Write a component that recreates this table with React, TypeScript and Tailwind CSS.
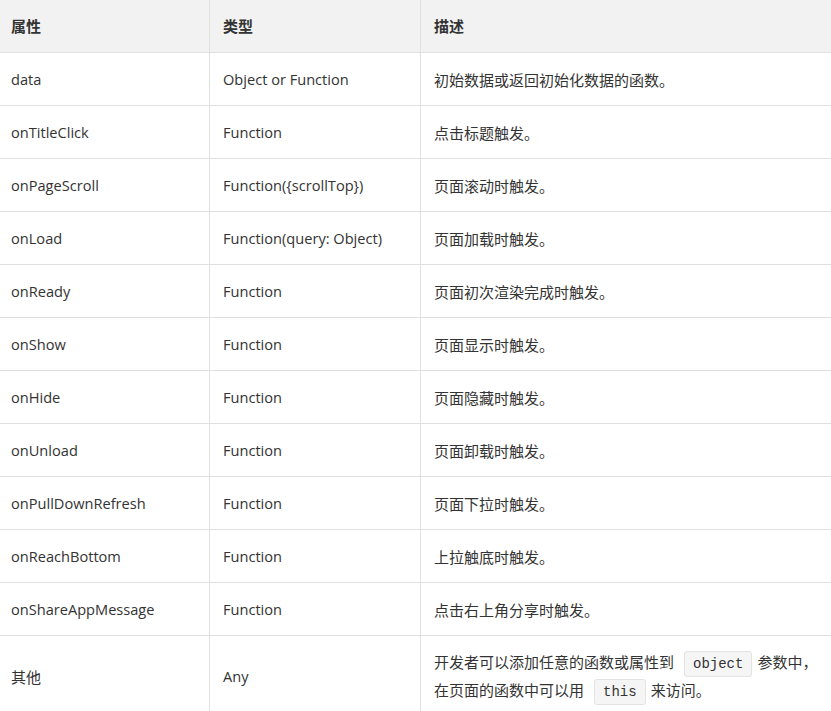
const rows: [string, string, string][] = [
  ['data', 'Object or Function', '初始数据或返回初始化数据的函数。'],
  ['onTitleClick', 'Function', '点击标题触发。'],
  ['onPageScroll', 'Function({scrollTop})', '页面滚动时触发。'],
  ['onLoad', 'Function(query: Object)', '页面加载时触发。'],
  ['onReady', 'Function', '页面初次渲染完成时触发。'],
  ['onShow', 'Function', '页面显示时触发。'],
  ['onHide', 'Function', '页面隐藏时触发。'],
  ['onUnload', 'Function', '页面卸载时触发。'],
  ['onPullDownRefresh', 'Function', '页面下拉时触发。'],
  ['onReachBottom', 'Function', '上拉触底时触发。'],
  ['onShareAppMessage', 'Function', '点击右上角分享时触发。'],
];

function Code({ children }: { children: string }) {
  return (
    <code className="ml-[10px] mr-[5px] inline-block rounded-[3px] border border-[#e3e3e3] bg-[#f5f5f5] px-[8px] align-middle leading-[24px] text-[14px] text-[#333] font-['Liberation_Mono',monospace]">
      {children}
    </code>
  );
}

export default function App() {
  return (
    <div className="w-[831px] overflow-hidden bg-white text-[14.6px] text-[#333] font-['Open_Sans','Noto_Sans_CJK_SC',sans-serif]">
      {/* header */}
      <div className="flex h-[53px] border-b border-[#e0e0e0] bg-[#f2f2f2] text-[15px] font-bold">
        <div className="flex w-[210px] shrink-0 items-center border-r border-[#e0e0e0] pl-[11px]">属性</div>
        <div className="flex w-[211px] shrink-0 items-center border-r border-[#e0e0e0] pl-[13px]">类型</div>
        <div className="flex flex-1 items-center pl-[13px]">描述</div>
      </div>

      {rows.map(([name, type, desc]) => (
        <div key={name} className="flex h-[53px] border-b border-[#e0e0e0]">
          <div className="flex w-[210px] shrink-0 items-center border-r border-[#e0e0e0] pl-[11px] pt-[2px]">{name}</div>
          <div className="flex w-[211px] shrink-0 items-center border-r border-[#e0e0e0] pl-[13px] pt-[2px]">{type}</div>
          <div className="flex flex-1 items-center pl-[13px] pt-[2px] text-[15px]">{desc}</div>
        </div>
      ))}

      {/* last row */}
      <div className="flex h-[82px]">
        <div className="flex w-[210px] shrink-0 items-center border-r border-[#e0e0e0] pl-[11px] text-[15px]">其他</div>
        <div className="flex w-[211px] shrink-0 items-center border-r border-[#e0e0e0] pl-[13px]">Any</div>
        <div className="flex-1 pl-[13px] pt-[13px] text-[15px] leading-[27px]">
          开发者可以添加任意的函数或属性到<Code>object</Code>参数中，
          <br />
          在页面的函数中可以用<Code>this</Code>来访问。
        </div>
      </div>
    </div>
  );
}
